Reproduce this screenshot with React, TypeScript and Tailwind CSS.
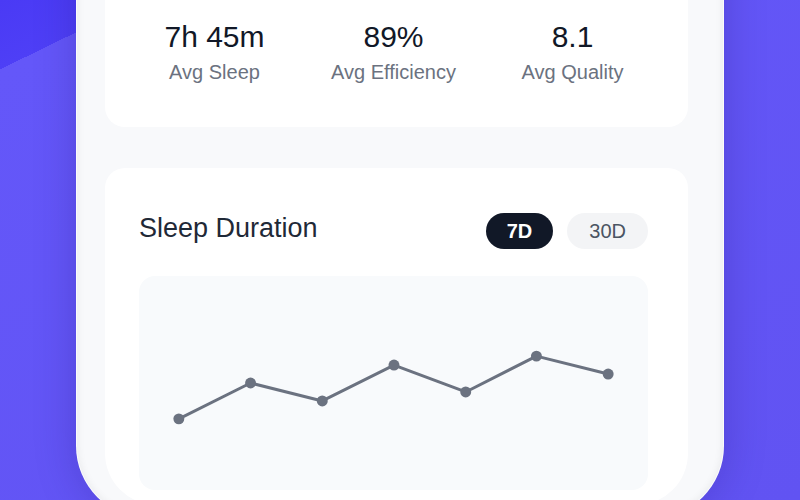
const stats = [
  { value: "7h 45m", label: "Avg Sleep" },
  { value: "89%", label: "Avg Efficiency" },
  { value: "8.1", label: "Avg Quality" },
];

// chart points, in the chart's own 511x214 box
const points = [
  [40, 143],
  [112, 107],
  [184, 125],
  [256, 89],
  [328, 116],
  [399, 80],
  [471, 98],
];

export default function App() {
  return (
    <div
      className="h-[500px] overflow-hidden flex justify-center bg-[linear-gradient(154deg,#4a3af5_0%,#4e3ff6_7.8%,#6457f9_7.8%,#6153f2_100%)]"
      style={{ fontFamily: '"Liberation Sans", Arial, sans-serif' }}
    >
      <div className="self-start w-[648px] mt-[-120px] rounded-[72px] bg-[#f8f9fb] pt-[28px] pl-[28px] pr-[35px] pb-[12px] border border-white/40 shadow-[0_0_40px_rgba(30,20,120,0.25),inset_0_0_8px_rgba(0,0,0,0.07)]">
        <div className="h-[596px] rounded-b-[52px] overflow-hidden flex flex-col">
          <div className="bg-white rounded-[20px] pt-[110px] pb-[41px] pl-[20px] pr-[26px] grid grid-cols-3 text-center">
            {stats.map((s) => (
              <div key={s.label} className="flex flex-col items-center">
                <span className="text-[30px] leading-9 text-[#111827]">{s.value}</span>
                <span className="mt-[3px] text-[20px] leading-7 text-[#6b7280]">{s.label}</span>
              </div>
            ))}
          </div>

          <div className="mt-[41px] bg-white rounded-[20px] pt-[45px] pl-[34px] pr-[40px] pb-10">
            <div className="flex items-start justify-between">
              <h2 className="-mt-[3px] text-[27px] leading-9 text-[#1f2937]">Sleep Duration</h2>
              <div className="flex gap-[14px]">
                <button className="h-9 rounded-full bg-[#111827] px-[21px] text-[20px] font-bold text-white">
                  7D
                </button>
                <button className="h-9 rounded-full bg-[#f3f4f6] px-[22px] text-[20px] text-[#4b5563]">
                  30D
                </button>
              </div>
            </div>

            <div className="mt-[27px] h-[214px] rounded-2xl bg-[#f8fafc]">
              <svg viewBox="0 0 511 214" className="w-full h-full">
                <polyline
                  points={points.map((p) => p.join(",")).join(" ")}
                  fill="none"
                  stroke="#6b7280"
                  strokeWidth="3"
                  strokeLinejoin="round"
                />
                {points.map(([x, y]) => (
                  <circle key={x} cx={x} cy={y} r="5.5" fill="#6b7280" />
                ))}
              </svg>
            </div>
          </div>
        </div>
      </div>
    </div>
  );
}
